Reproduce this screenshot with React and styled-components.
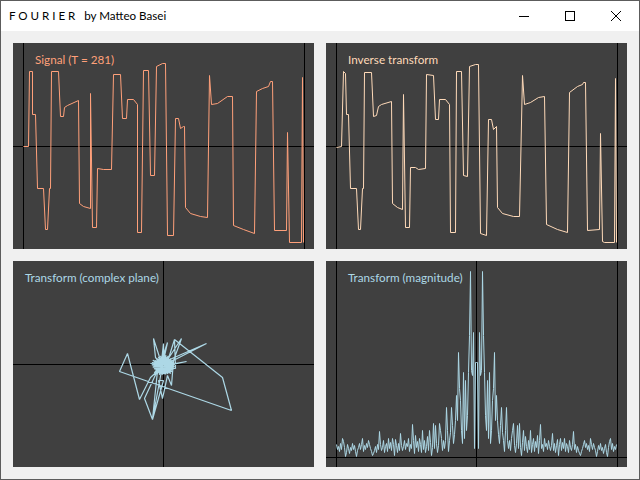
import React from 'react';
import styled, { createGlobalStyle } from 'styled-components';

// screen coordinates, read off the reference
const signal = '23,146 28,146 29,71 32,71 32,114 35,114 37,188 43,188 45,229 47,229 49,188 50,188 51,71 58,71 60,116 63,116 64,107 67,105 78,100 79,203 83,206 90,208 90,93 92,227 96,227 97,168 103,169 111,169 113,74 120,74 122,118 126,118 127,99 133,99 137,104 137,232 141,232 143,70 148,70 150,175 154,175 156,66 162,63 165,63 167,235 173,235 175,118 178,118 180,128 183,126 184,126 185,207 190,213 200,216 207,217 209,75 211,104 217,103 227,96 232,96 233,225 243,229 254,233 256,91 262,88 268,86 270,81 272,81 274,230 286,230 287,132 289,242 301,242 302,77 303,242';

const inverse = '336,147 341,146 343,71 345,73 346,114 348,114 350,188 356,188 358,229 360,229 362,188 363,188 364,72 371,72 373,116 376,115 378,106 381,104 391,101 392,203 397,207 402,209 403,94 405,227 409,227 410,167 415,167 418,169 425,168 426,74 433,75 435,119 438,119 439,99 445,99 449,104 450,232 455,232 456,71 461,71 463,175 467,176 469,66 475,64 478,64 480,233 486,235 488,119 491,119 493,129 496,126 497,207 502,213 513,216 519,216 522,75 524,104 530,102 538,97 544,96 546,224 557,229 567,232 569,92 577,86 582,84 583,82 585,82 587,230 599,229 600,133 602,241 604,242 614,242 615,78 616,242';

const complexOuter = '174,339 222,377 231,410 119,371 127,353 139,399 150,377 162,366 153,338 155,357 162,365 152,419 144,398 157,370 152,419 163,380 158,380 162,398 167,375 171,385 173,360 181,338 160,370 163,343 163,360 167,342 160,363 206,343 163,365 186,361 163,366 150,363 175,368 174,339 168,358';

function knot() {
    // dense knot in the centre of the complex plane
    const pts = [];
    for (let i = 0; i < 220; i++) {
        const r = 2 + 9 * Math.abs(Math.sin(i * 1.7)) * (1 - i / 400);
        const a = i * 2.399;
        pts.push(`${(163 + r * 1.15 * Math.cos(a)).toFixed(1)},${(365 + r * Math.sin(a)).toFixed(1)}`);
    }
    return pts.join(' ');
}

const halfMagnitude = [
    362, 362, 448, 332, 375, 370, 271, 335, 372, 415, 430, 380, 438, 372, 443, 430, 400, 388, 352, 420,
    395, 420, 434, 443, 425, 407, 432, 440, 451, 430, 407, 440, 448, 440, 450, 438, 430, 423, 445, 452,
    443, 425, 448, 423, 447, 455, 442, 430, 450, 436, 446, 452, 440, 449, 430, 452, 444, 438, 451, 441,
    447, 435, 453, 440, 424, 448, 444, 451, 438, 446, 443, 449, 440, 446, 450, 445, 433, 450, 443, 452,
    445, 439, 455, 444, 438, 450, 442, 448, 438, 451, 443, 446, 452, 440, 447, 450, 444, 431, 449, 444,
    452, 446, 450, 453, 455, 451, 448, 444, 440, 447, 443, 449, 445, 451, 438, 444, 449, 443, 447, 450,
    456, 451, 445, 449, 443, 450, 447, 453, 448, 444, 452, 456, 447, 441, 438, 449, 443, 451, 446, 449,
    444,
];

function magnitude() {
    const center = 476;
    const right = halfMagnitude.map((y, i) => `${center + i},${y}`);
    const left = halfMagnitude.slice(1).map((y, i) => `${center - i - 1},${y}`).reverse();
    return [...left, ...right].join(' ');
}

const panels = [
    { key: 'signal', title: 'Signal (T = 281)', color: '#ffa07a', left: 22, ox: 13, oy: 43, axes: { v: [23, 304], h: 146 }, lines: [signal], weight: 1 },
    { key: 'inverse', title: 'Inverse transform', color: '#ffdab9', left: 22, ox: 326, oy: 43, axes: { v: [336, 617], h: 146 }, lines: [inverse], weight: 1 },
    { key: 'complex', title: 'Transform (complex plane)', color: '#add8e6', left: 12, ox: 13, oy: 261, axes: { v: [163], h: 364 }, lines: [complexOuter, knot()], weight: 1.2 },
    { key: 'magnitude', title: 'Transform (magnitude)', color: '#add8e6', left: 22, ox: 326, oy: 261, axes: { v: [336, 476, 617], h: 457 }, lines: [magnitude()], weight: 1 },
];

function Chart({ panel }) {
    const { ox, oy, axes, lines, color, weight } = panel;
    return (
        <PlotSvg viewBox={`${ox} ${oy} 301 206`}>
            {axes.v.map((x) => (
                <line key={x} x1={x + 0.5} x2={x + 0.5} y1={oy} y2={oy + 206} stroke="#000" />
            ))}
            <line x1={ox} x2={ox + 301} y1={axes.h + 0.5} y2={axes.h + 0.5} stroke="#000" />
            {lines.map((points, i) => (
                <polyline
                    key={i}
                    points={points}
                    transform="translate(0.5 0.5)"
                    fill="none"
                    stroke={color}
                    strokeWidth={weight}
                    strokeLinejoin="bevel"
                />
            ))}
        </PlotSvg>
    );
}

export default function App() {
    return (
        <Window>
            <GlobalStyle />
            <TitleBar>
                <Title>F O U R I E R &nbsp; by Matteo Basei</Title>
                <Controls>
                    <ControlButton>
                        <svg width="10" height="10" viewBox="0 0 10 10">
                            <path d="M0 5.5H10" stroke="#000" />
                        </svg>
                    </ControlButton>
                    <ControlButton>
                        <svg width="10" height="10" viewBox="0 0 10 10">
                            <rect x="0.5" y="0.5" width="9" height="9" fill="none" stroke="#000" />
                        </svg>
                    </ControlButton>
                    <ControlButton>
                        <svg width="10" height="10" viewBox="0 0 10 10">
                            <path d="M0 0L10 10M10 0L0 10" stroke="#000" />
                        </svg>
                    </ControlButton>
                </Controls>
            </TitleBar>
            <Content>
                {panels.map((panel) => (
                    <Panel key={panel.key}>
                        <Chart panel={panel} />
                        <PanelLabel $color={panel.color} $left={panel.left}>{panel.title}</PanelLabel>
                    </Panel>
                ))}
            </Content>
        </Window>
    );
}

const GlobalStyle = createGlobalStyle`
body{
    margin: 0;
    background-color: #f0f0f0;
}
`

const Window = styled.div`
width: 640px;
height: 480px;
box-sizing: border-box;
border: 1px solid #5c5c5c;
display: flex;
flex-direction: column;
font-family: Lato, "Liberation Sans", sans-serif;
overflow: hidden;
`

const TitleBar = styled.div`
height: 30px;
flex: none;
background-color: #fff;
display: flex;
align-items: center;
justify-content: space-between;
`

const Title = styled.div`
padding: 0 0 1px 8px;
font-size: 11.6px;
color: #000;
white-space: pre;
`

const Controls = styled.div`
display: flex;
height: 100%;
`

const ControlButton = styled.div`
width: 46px;
display: flex;
align-items: center;
justify-content: center;
svg{
    display: block;
}
`

const Content = styled.div`
flex: 1;
background-color: #f0f0f0;
padding: 12px;
display: grid;
grid-template-columns: 1fr 1fr;
grid-template-rows: 1fr 1fr;
gap: 12px;
`

const Panel = styled.div`
position: relative;
background-color: #404040;
overflow: hidden;
`

const PlotSvg = styled.svg`
display: block;
width: 100%;
height: 100%;
`

const PanelLabel = styled.span`
position: absolute;
top: 9px;
left: ${(p) => p.$left}px;
font-size: 11.7px;
line-height: 14px;
color: ${(p) => p.$color};
`
